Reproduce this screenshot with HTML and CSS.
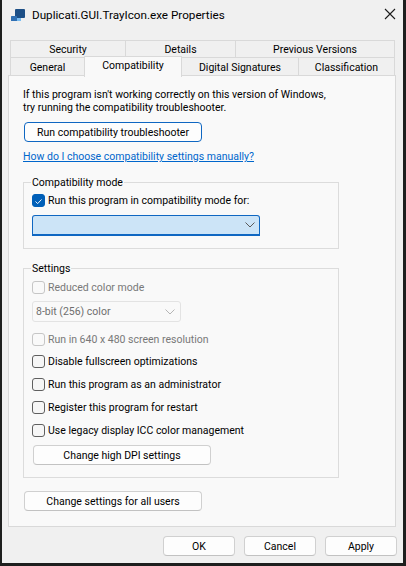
FILE: index.html
```html
<!DOCTYPE html>
<html>
<head>
<meta charset="utf-8">
<link rel="stylesheet" href="styles.css">
</head>
<body>
<div class="window">
  <div class="titlebar">
    <svg class="appicon" width="16" height="14" viewBox="0 0 16 14">
      <rect x="4" y="0" width="10" height="9" rx="1" fill="#1d4f86"/>
      <rect x="0" y="7" width="6" height="5" rx="0.5" fill="#2f6fb3"/>
      <rect x="6" y="9" width="4" height="3" fill="#79bdf2"/>
    </svg>
    <span class="title">Duplicati.GUI.TrayIcon.exe Properties</span>
    <svg class="close" width="12" height="12" viewBox="0 0 12 12">
      <path d="M1 1 L11 11 M11 1 L1 11" stroke="#1b1b1b" stroke-width="1.1" fill="none"/>
    </svg>
  </div>

  <div class="tabs">
    <div class="tabrow">
      <div class="tab" style="width:116px">Security</div>
      <div class="tab" style="width:111px">Details</div>
      <div class="tab" style="width:160px">Previous Versions</div>
    </div>
    <div class="tabrow">
      <div class="tab" style="width:75px">General</div>
      <div class="tab selected" style="width:98px">Compatibility</div>
      <div class="tab" style="width:118px">Digital Signatures</div>
      <div class="tab" style="width:97px">Classification</div>
    </div>
  </div>

  <div class="panel">
    <p class="intro">If this program isn't working correctly on this version of Windows,<br>try running the compatibility troubleshooter.</p>
    <div class="btn default wide first">Run compatibility troubleshooter</div>
    <a class="link" href="#">How do I choose compatibility settings manually?</a>

    <fieldset class="group g1">
      <legend>Compatibility mode</legend>
      <div class="check r-run">
        <span class="box checked">
          <svg width="13" height="13" viewBox="0 0 13 13"><path d="M3.3 6.8 L5.5 9 L9.8 4.4" stroke="#ffffff" stroke-width="1.1" fill="none" stroke-linecap="round" stroke-linejoin="round"/></svg>
        </span>
        <span>Run this program in compatibility mode for:</span>
      </div>
      <div class="select active">
        <span class="seltext"></span>
        <svg class="chev" width="10" height="6" viewBox="0 0 10 6"><path d="M0.5 0.5 L5 5 L9.5 0.5" stroke="#5a5a5a" stroke-width="1" fill="none"/></svg>
      </div>
    </fieldset>

    <fieldset class="group g2">
      <legend>Settings</legend>
      <div class="check disabled r-reduced"><span class="box"></span><span>Reduced color mode</span></div>
      <div class="select disabled">
        <span class="seltext">8-bit (256) color</span>
        <svg class="chev" width="10" height="6" viewBox="0 0 10 6"><path d="M0.5 0.5 L5 5 L9.5 0.5" stroke="#b5b5b5" stroke-width="1" fill="none"/></svg>
      </div>
      <div class="check disabled r-640"><span class="box"></span><span>Run in 640 x 480 screen resolution</span></div>
      <div class="check r-full"><span class="box"></span><span>Disable fullscreen optimizations</span></div>
      <div class="check r-next"><span class="box"></span><span>Run this program as an administrator</span></div>
      <div class="check r-next"><span class="box"></span><span>Register this program for restart</span></div>
      <div class="check r-next"><span class="box"></span><span>Use legacy display ICC color management</span></div>
      <div class="btn wide dpi">Change high DPI settings</div>
    </fieldset>

    <div class="btn wide allusers">Change settings for all users</div>
  </div>

  <div class="footer">
    <div class="btn small">OK</div>
    <div class="btn small">Cancel</div>
    <div class="btn small">Apply</div>
  </div>
</div>
</body>
</html>
```

FILE: styles.css
```css
* { box-sizing: border-box; }

html, body {
  margin: 0;
  padding: 0;
}

body {
  width: 406px;
  height: 566px;
  overflow: hidden;
  background: #1e1f1e;
  font-family: Roboto, "Liberation Sans", sans-serif;
  font-size: 10.5px;
  color: #000;
}

.window {
  margin-left: 2px;
  width: 401px;
  height: 563px;
  background: #f0f0f0;
  display: flex;
  flex-direction: column;
}

.titlebar {
  height: 30px;
  display: flex;
  align-items: center;
}

.appicon {
  margin-left: 9px;
  margin-top: 2px;
}

.title {
  margin-left: 5px;
  font-size: 11.7px;
  flex: 1;
  color: #000;
}

.close {
  margin-right: 7px;
  margin-top: -2px;
}

.tabs {
  margin-top: 10px;
  margin-left: 8px;
  width: 384px;
  display: flex;
  flex-direction: column;
}

.tabrow {
  display: flex;
  align-items: flex-start;
}

.tabrow:first-child .tab { height: 17px; }
.tabrow + .tabrow .tab { height: 18px; }

.tab {
  flex: none;
  border: 1px solid #d9d9d9;
  border-bottom: none;
  background: #f0f0f0;
  display: flex;
  align-items: center;
  justify-content: center;
  margin-left: -1px;
  line-height: 13px;
  padding-top: 1px;
}

.tab:first-child { margin-left: 0; }

.tabrow + .tabrow .tab.selected {
  position: relative;
  z-index: 1;
  height: 21px;
  margin-top: -1px;
  margin-bottom: -2px;
  background: #f9f9f9;
  padding-top: 0;
  padding-bottom: 4px;
}

.panel {
  margin-left: 6px;
  width: 388px;
  height: 452px;
  border: 1px solid #d9d9d9;
  background: #f9f9f9;
  padding: 12px 14px 0 14px;
  display: flex;
  flex-direction: column;
  align-items: flex-start;
}

.intro {
  margin: 0;
  line-height: 13px;
}

.btn {
  height: 20px;
  border: 1px solid #d0d0d0;
  border-bottom-color: #c2c2c2;
  border-radius: 4px;
  background: #fdfdfd;
  display: flex;
  align-items: center;
  justify-content: center;
  line-height: 13px;
}

.btn.wide { width: 178px; margin-left: 1px; }
.btn.default { border: 1px solid #0f67c2; }
.btn.first { margin-top: 8px; }

.link {
  display: block;
  margin-top: 8px;
  line-height: 13px;
  color: #0066cc;
  text-decoration: underline;
}

.group {
  width: 316px;
  margin: 13px 0 0 0;
  border: 1px solid #dcdcdc;
  padding: 0 8px 12px 8px;
  min-width: 0;
}

.group legend {
  padding: 0 1px;
  margin-left: -1px;
  line-height: 13px;
}

.check {
  display: flex;
  align-items: center;
  height: 13px;
  line-height: 13px;
}

.box {
  width: 13px;
  height: 13px;
  border: 1px solid #5f5f5f;
  border-radius: 3px;
  background: #f6f6f6;
  margin-right: 3px;
  flex: none;
  display: flex;
}

.box.checked {
  background: #005fb8;
  border-color: #005fb8;
}

.check.disabled { color: #787878; }
.check.disabled .box { border-color: #c6c6c6; background: #f9f9f9; }

.r-run { margin-top: 5px; }
.r-reduced { margin-top: 6px; }
.r-640 { margin-top: 11px; }
.r-full { margin-top: 9px; }
.r-next { margin-top: 10px; }

.select {
  height: 21px;
  display: flex;
  align-items: center;
  justify-content: space-between;
  padding: 0 4px 0 4px;
}

.select.active {
  margin-top: 8px;
  width: 228px;
  background: #cce4f7;
  border: 1px solid #0f67c2;
  border-bottom: 2px solid #0f67c2;
  border-radius: 3px 3px 0 0;
  padding-right: 4px;
}

.select.disabled {
  margin-top: 7px;
  width: 149px;
  background: #f9f9f9;
  border: 1px solid #e3e3e3;
  border-radius: 3px;
  color: #6e6e6e;
  padding-left: 3px;
  padding-right: 5px;
}

.dpi { margin-top: 8px; }
.allusers { margin-top: 13px; }

.footer {
  margin-top: 9px;
  display: flex;
  justify-content: flex-end;
  gap: 9px;
  padding-right: 6px;
}

.btn.small { width: 72px; }
```
